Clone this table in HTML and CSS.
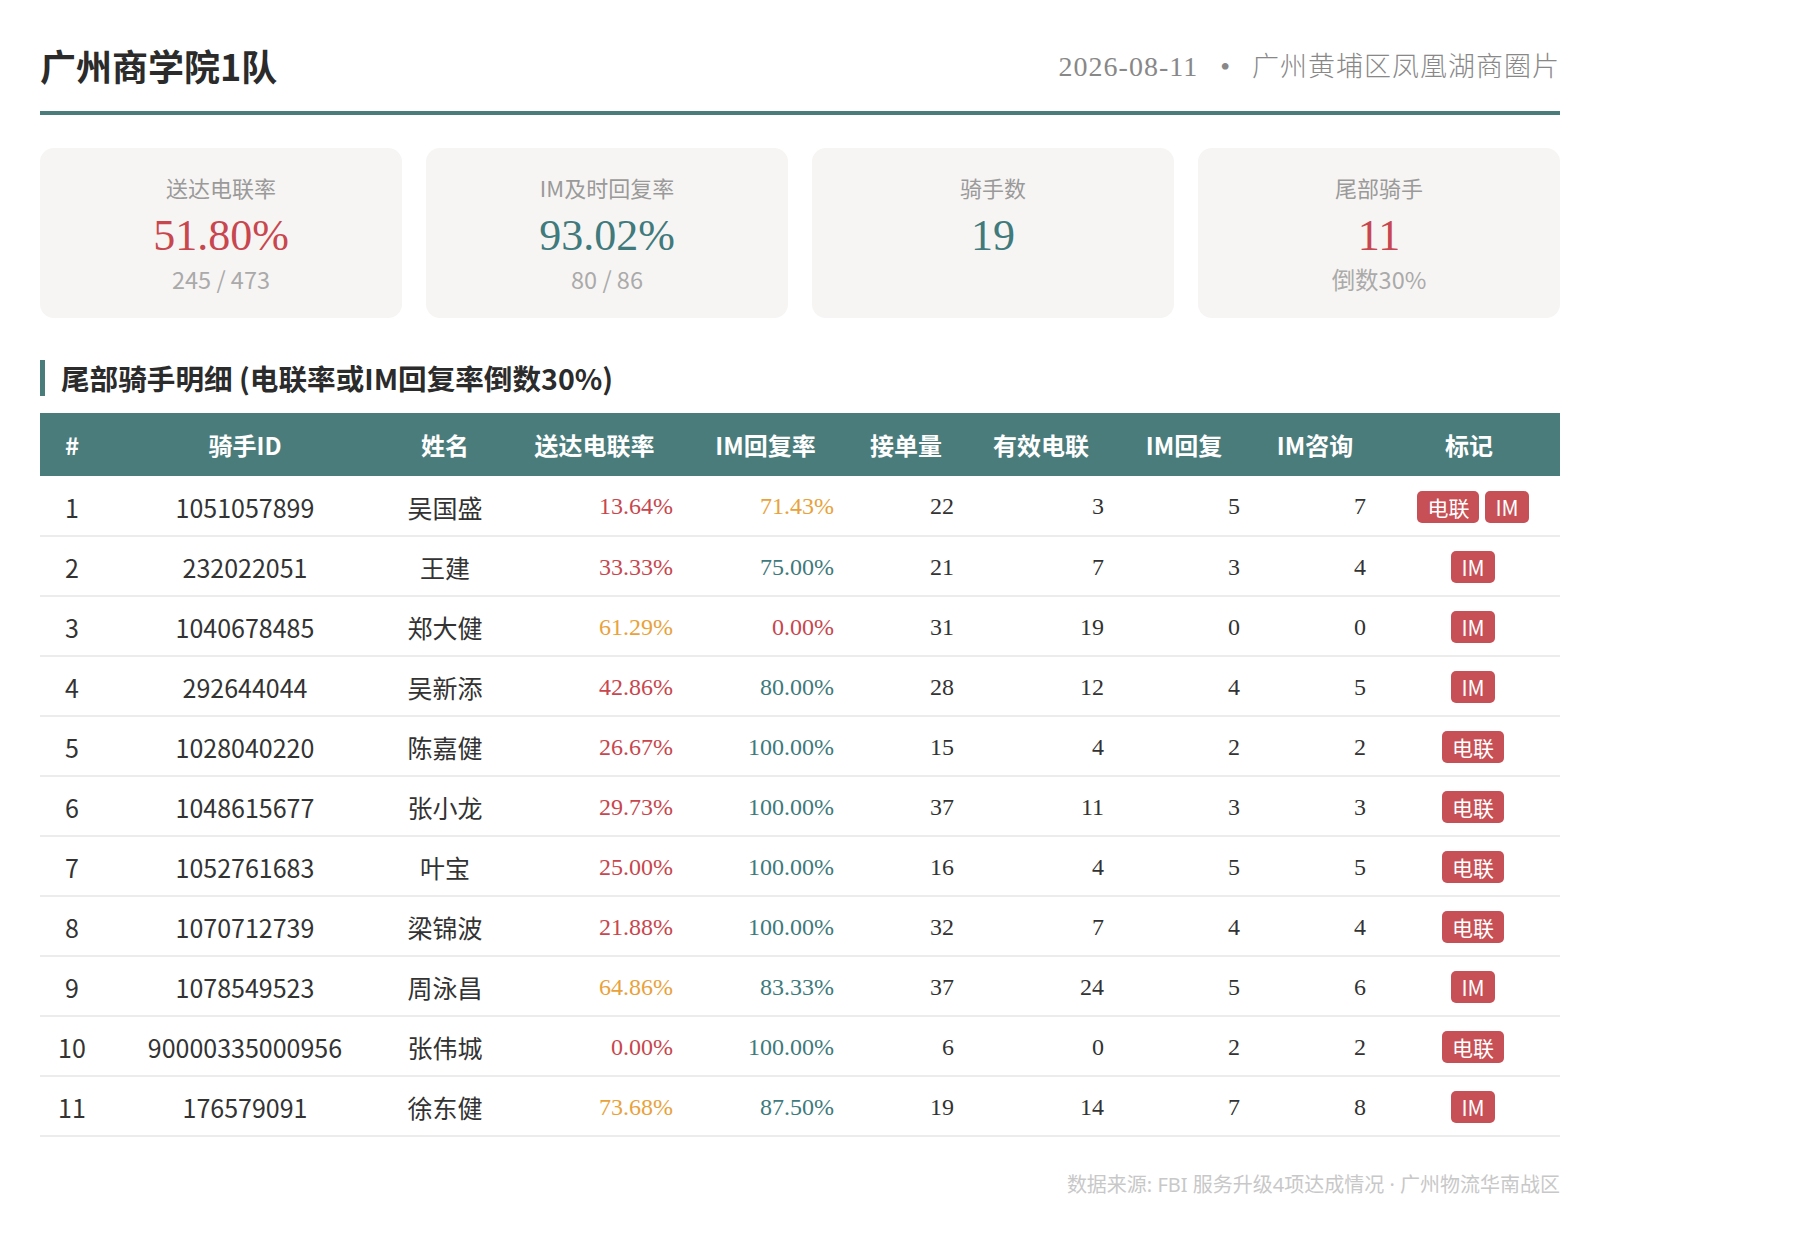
FILE: index.html
```html
<!DOCTYPE html>
<html lang="zh-CN">
<head>
<meta charset="utf-8">
<title>广州商学院1队</title>
<link rel="stylesheet" href="styles.css">
</head>
<body>
<div class="page">
  <header class="top">
    <h1 class="title">广州商学院1队</h1>
    <div class="meta"><span class="date">2026-08-11</span><span class="dot">•</span><span class="place">广州黄埔区凤凰湖商圈片</span></div>
  </header>

  <section class="cards">
    <div class="card">
      <div class="label">送达电联率</div>
      <div class="value red">51.80%</div>
      <div class="sub">245 / 473</div>
    </div>
    <div class="card">
      <div class="label">IM及时回复率</div>
      <div class="value teal">93.02%</div>
      <div class="sub">80 / 86</div>
    </div>
    <div class="card">
      <div class="label">骑手数</div>
      <div class="value teal">19</div>
    </div>
    <div class="card">
      <div class="label">尾部骑手</div>
      <div class="value red">11</div>
      <div class="sub">倒数30%</div>
    </div>
  </section>

  <h2 class="section-title">尾部骑手明细 (电联率或IM回复率倒数30%)</h2>

  <table class="riders">
    <colgroup>
      <col class="c-idx"><col class="c-id"><col class="c-name"><col class="c-rate1"><col class="c-rate2"><col class="c-orders"><col class="c-calls"><col class="c-imr"><col class="c-imq"><col class="c-tags">
    </colgroup>
    <thead>
      <tr><th>#</th><th>骑手ID</th><th>姓名</th><th>送达电联率</th><th>IM回复率</th><th>接单量</th><th>有效电联</th><th>IM回复</th><th>IM咨询</th><th>标记</th></tr>
    </thead>
    <tbody>
      <tr><td class="txt">1</td><td class="txt">1051057899</td><td class="txt">吴国盛</td><td class="num red">13.64%</td><td class="num orange">71.43%</td><td class="num">22</td><td class="num">3</td><td class="num">5</td><td class="num">7</td><td class="tags"><span class="tag">电联</span><span class="tag">IM</span></td></tr>
      <tr><td class="txt">2</td><td class="txt">232022051</td><td class="txt">王建</td><td class="num red">33.33%</td><td class="num teal">75.00%</td><td class="num">21</td><td class="num">7</td><td class="num">3</td><td class="num">4</td><td class="tags"><span class="tag">IM</span></td></tr>
      <tr><td class="txt">3</td><td class="txt">1040678485</td><td class="txt">郑大健</td><td class="num orange">61.29%</td><td class="num red">0.00%</td><td class="num">31</td><td class="num">19</td><td class="num">0</td><td class="num">0</td><td class="tags"><span class="tag">IM</span></td></tr>
      <tr><td class="txt">4</td><td class="txt">292644044</td><td class="txt">吴新添</td><td class="num red">42.86%</td><td class="num teal">80.00%</td><td class="num">28</td><td class="num">12</td><td class="num">4</td><td class="num">5</td><td class="tags"><span class="tag">IM</span></td></tr>
      <tr><td class="txt">5</td><td class="txt">1028040220</td><td class="txt">陈嘉健</td><td class="num red">26.67%</td><td class="num teal">100.00%</td><td class="num">15</td><td class="num">4</td><td class="num">2</td><td class="num">2</td><td class="tags"><span class="tag">电联</span></td></tr>
      <tr><td class="txt">6</td><td class="txt">1048615677</td><td class="txt">张小龙</td><td class="num red">29.73%</td><td class="num teal">100.00%</td><td class="num">37</td><td class="num">11</td><td class="num">3</td><td class="num">3</td><td class="tags"><span class="tag">电联</span></td></tr>
      <tr><td class="txt">7</td><td class="txt">1052761683</td><td class="txt">叶宝</td><td class="num red">25.00%</td><td class="num teal">100.00%</td><td class="num">16</td><td class="num">4</td><td class="num">5</td><td class="num">5</td><td class="tags"><span class="tag">电联</span></td></tr>
      <tr><td class="txt">8</td><td class="txt">1070712739</td><td class="txt">梁锦波</td><td class="num red">21.88%</td><td class="num teal">100.00%</td><td class="num">32</td><td class="num">7</td><td class="num">4</td><td class="num">4</td><td class="tags"><span class="tag">电联</span></td></tr>
      <tr><td class="txt">9</td><td class="txt">1078549523</td><td class="txt">周泳昌</td><td class="num orange">64.86%</td><td class="num teal">83.33%</td><td class="num">37</td><td class="num">24</td><td class="num">5</td><td class="num">6</td><td class="tags"><span class="tag">IM</span></td></tr>
      <tr><td class="txt">10</td><td class="txt">90000335000956</td><td class="txt">张伟城</td><td class="num red">0.00%</td><td class="num teal">100.00%</td><td class="num">6</td><td class="num">0</td><td class="num">2</td><td class="num">2</td><td class="tags"><span class="tag">电联</span></td></tr>
      <tr><td class="txt">11</td><td class="txt">176579091</td><td class="txt">徐东健</td><td class="num orange">73.68%</td><td class="num teal">87.50%</td><td class="num">19</td><td class="num">14</td><td class="num">7</td><td class="num">8</td><td class="tags"><span class="tag">IM</span></td></tr>
    </tbody>
  </table>

  <footer class="source">数据来源: FBI 服务升级4项达成情况 · 广州物流华南战区</footer>
</div>
</body>
</html>
```
FILE: styles.css
```css
* { box-sizing: border-box; }

body {
  margin: 0;
  background: #ffffff;
  font-family: "Noto Sans CJK SC", "Noto Sans", sans-serif;
  color: #333333;
}

.page {
  width: 1600px;
  padding: 40px;
}

.top {
  display: flex;
  justify-content: space-between;
  align-items: center;
  padding: 4px 0 24px;
  border-bottom: 4px solid #4a7c7c;
}

.title {
  margin: 0;
  font-size: 36px;
  line-height: 43px;
  font-weight: 700;
  color: #2b2b2b;
}

.meta {
  font-family: "Liberation Serif", "Noto Sans CJK SC", serif;
  font-size: 28px;
  line-height: 36px;
  color: #888888;
}

.meta .date {
  letter-spacing: 1px;
}

.meta .dot {
  margin: 0 22px;
}

.meta .place {
  font-family: "Noto Sans CJK SC", sans-serif;
  font-size: 27px;
  font-weight: 300;
  letter-spacing: 1px;
}

.cards {
  display: grid;
  grid-template-columns: repeat(4, 1fr);
  gap: 24px;
  margin-top: 33px;
}

.card {
  background: #f7f5f3;
  border-radius: 14px;
  padding: 24px 10px 22px;
  text-align: center;
  min-height: 170px;
}

.label {
  font-size: 22px;
  line-height: 30px;
  color: #9a9a9a;
}

.value {
  margin-top: 8px;
  font-family: "Liberation Serif", serif;
  font-size: 44px;
  line-height: 52px;
}

.sub {
  margin-top: 2px;
  font-size: 23.5px;
  line-height: 30px;
  color: #aaaaaa;
}

.red { color: #c8474e; }
.teal { color: #3f7a7c; }
.orange { color: #e9a23b; }

.section-title {
  margin: 42px 0 0;
  padding-left: 16px;
  border-left: 5px solid #4a7c7c;
  font-size: 28.6px;
  line-height: 36px;
  font-weight: 700;
  color: #2b2b2b;
}

.riders {
  margin-top: 17px;
  width: 1520px;
  border-collapse: collapse;
  table-layout: fixed;
}

.c-idx { width: 64px; }
.c-id { width: 282px; }
.c-name { width: 118px; }
.c-rate1 { width: 181px; }
.c-rate2 { width: 161px; }
.c-orders { width: 120px; }
.c-calls { width: 150px; }
.c-imr { width: 136px; }
.c-imq { width: 126px; }
.c-tags { width: 182px; }

.riders th {
  height: 63px;
  padding: 0;
  background: #4a7c7c;
  color: #ffffff;
  font-size: 24px;
  font-weight: 700;
  text-align: center;
}

.riders td {
  height: 60px;
  padding: 2px 0 0;
  border-bottom: 2px solid #ececec;
  vertical-align: middle;
}

.riders td.txt {
  text-align: center;
  font-size: 25px;
  color: #333333;
}

.riders td.num {
  text-align: right;
  padding-right: 12px;
  font-family: "Liberation Serif", serif;
  font-size: 24px;
}

.riders td.num:not(.red):not(.orange):not(.teal) {
  color: #333333;
}

.riders td.tags {
  padding-left: 8px;
  text-align: center;
  font-size: 0;
}

.tag {
  display: inline-block;
  margin: 0 3px;
  padding: 0 10px;
  background: #c75056;
  color: #ffffff;
  font-size: 21px;
  line-height: 32px;
  border-radius: 5px;
  vertical-align: middle;
}

.source {
  margin-top: 34px;
  width: 1520px;
  text-align: right;
  font-family: "Noto Sans", "Noto Sans CJK SC", sans-serif;
  font-size: 20px;
  line-height: 28px;
  color: #c8c8c8;
}
```
